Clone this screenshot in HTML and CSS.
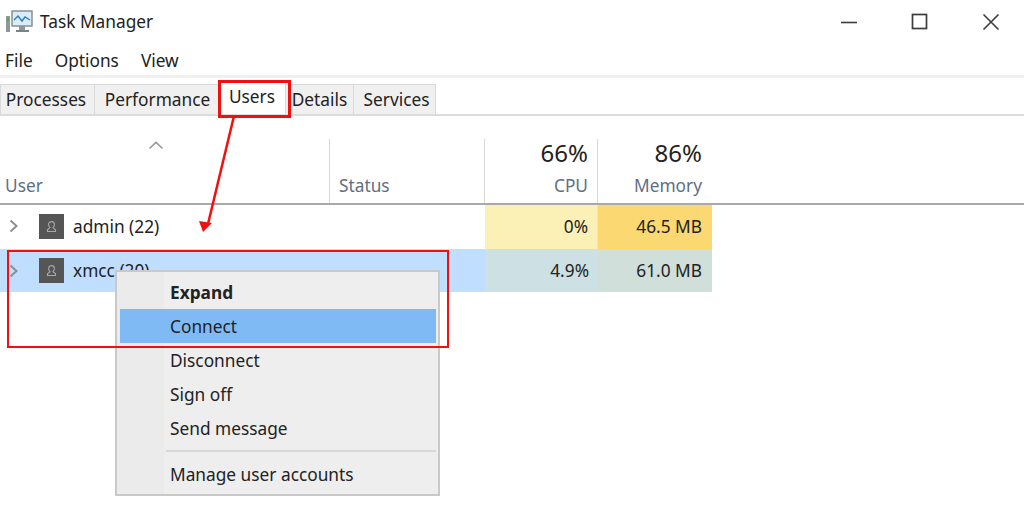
FILE: index.html
```html
<!DOCTYPE html>
<html lang="en">
<head>
<meta charset="utf-8">
<title>Task Manager</title>
<link rel="stylesheet" href="styles.css">
</head>
<body>
<div class="app">
  <header class="titlebar">
    <svg class="appicon" width="28" height="28" viewBox="0 0 28 28">
      <rect x="7" y="3" width="20" height="15" fill="#dcebf5" stroke="#7d8a94" stroke-width="1.4"/>
      <path d="M9 12l4-4 4 5 3-4 5 3" fill="none" stroke="#2a7fc0" stroke-width="1.4"/>
      <rect x="14" y="18" width="6" height="4" fill="#8d979e"/>
      <rect x="11" y="22" width="13" height="2" fill="#78838a"/>
      <rect x="1" y="8" width="4" height="16" fill="#8d979e"/>
      <rect x="2" y="10" width="2" height="3" fill="#55b04c"/>
    </svg>
    <span class="apptitle">Task Manager</span>
    <div class="winbtns">
      <svg class="winbtn" width="18" height="18" viewBox="0 0 18 18"><path d="M1 9.500h16" stroke="#3c3c3c" stroke-width="1.600"/></svg>
      <svg class="winbtn" width="18" height="18" viewBox="0 0 18 18"><rect x="1.500" y="1.500" width="14" height="14" fill="none" stroke="#3c3c3c" stroke-width="1.700"/></svg>
      <svg class="winbtn" width="18" height="18" viewBox="0 0 18 18"><path d="M1.500 1.500l15 15M16.500 1.500l-15 15" stroke="#3c3c3c" stroke-width="1.600"/></svg>
    </div>
  </header>
  <nav class="menubar">
    <span>File</span><span>Options</span><span>View</span>
  </nav>
  <div class="tabs">
    <span class="tab tab-processes">Processes</span>
    <span class="tab tab-performance">Performance</span>
    <span class="tab tab-users">Users</span>
    <span class="tab tab-details">Details</span>
    <span class="tab tab-services">Services</span>
  </div>
  <div class="table">
    <div class="thead">
      <div class="th col-user">
        <svg class="sort" width="16" height="9" viewBox="0 0 16 9"><path d="M1.500 7.500L8 1.500l6.500 6" fill="none" stroke="#9a9a9a" stroke-width="1.700"/></svg>
        <span class="th-label">User</span>
      </div>
      <div class="th col-status"><span class="th-label">Status</span></div>
      <div class="th col-num"><span class="pct">66%</span><span class="th-label">CPU</span></div>
      <div class="th col-num col-mem"><span class="pct">86%</span><span class="th-label">Memory</span></div>
    </div>
    <div class="row row-first">
      <div class="cell col-user user-cell">
        <svg class="chev" width="10" height="14" viewBox="0 0 10 14"><path d="M1.500 1.500L7.500 7l-6 5.500" fill="none" stroke="#8f8f8f" stroke-width="2"/></svg>
        <svg class="avatar" width="25" height="25" viewBox="0 0 25 25"><rect width="25" height="25" fill="#555"/><path d="M8.500 17.500v-1.800l2.500-2c-1-1-1.400-2-1.400-3.200 0-1.700 1.200-2.900 2.900-2.900s2.900 1.200 2.900 2.900c0 1.200-.4 2.200-1.400 3.200l2.500 2v1.800z" fill="none" stroke="#a8a8a8" stroke-width="1.100"/></svg>
        <span>admin (22)</span>
      </div>
      <div class="cell col-status"></div>
      <div class="cell col-num heat-cpu">0%</div>
      <div class="cell col-num col-mem heat-mem">46.5 MB</div>
    </div>
    <div class="row row-selected">
      <div class="cell col-user user-cell">
        <svg class="chev" width="10" height="14" viewBox="0 0 10 14"><path d="M1.500 1.500L7.500 7l-6 5.500" fill="none" stroke="#8f8f8f" stroke-width="2"/></svg>
        <svg class="avatar" width="25" height="25" viewBox="0 0 25 25"><rect width="25" height="25" fill="#555"/><path d="M8.500 17.500v-1.800l2.500-2c-1-1-1.400-2-1.400-3.200 0-1.700 1.200-2.900 2.900-2.900s2.900 1.200 2.900 2.900c0 1.200-.4 2.200-1.400 3.200l2.500 2v1.800z" fill="none" stroke="#a8a8a8" stroke-width="1.100"/></svg>
        <span>xmcc (20)</span>
      </div>
      <div class="cell col-status"></div>
      <div class="cell col-num sel-cpu">4.9%</div>
      <div class="cell col-num col-mem sel-mem">61.0 MB</div>
    </div>
  </div>

  <div class="ctx">
    <div class="ctx-item ctx-bold">Expand</div>
    <div class="ctx-item ctx-active">Connect</div>
    <div class="ctx-item">Disconnect</div>
    <div class="ctx-item">Sign off</div>
    <div class="ctx-item">Send message</div>
    <div class="ctx-sep"></div>
    <div class="ctx-item">Manage user accounts</div>
  </div>

  <div class="mark mark-tab"></div>
  <div class="mark mark-row"></div>
  <svg class="arrow" width="45" height="120" viewBox="0 0 45 120">
    <path d="M39 0L13 108" stroke="#f01010" stroke-width="2.500" fill="none"/>
    <path d="M8 116L4 105l13 2z" fill="#f01010"/>
  </svg>
</div>
</body>
</html>
```
FILE: styles.css
```css
* { box-sizing: border-box; }
html, body { margin: 0; padding: 0; background: #fff; }
body { width: 1024px; height: 524px; overflow: hidden; }
.app {
  position: relative;
  width: 1024px;
  height: 524px;
  font-family: "Noto Sans", "Open Sans", sans-serif;
  font-size: 17.3px;
  color: #222;
}
.titlebar {
  height: 45px;
  display: flex;
  align-items: center;
  padding: 0 0 2px 5px;
}
.appicon { margin-right: 7px; }
.apptitle { font-size: 17.3px; }
.winbtns { margin-left: auto; display: flex; gap: 53px; padding-right: 24px; align-items: center; }
.menubar {
  height: 30px;
  display: flex;
  align-items: center;
  gap: 22px;
  padding: 1px 0 0 5px;
}
.tabs {
  border-top: 3px solid #f0f0f0;
  height: 41px;
  padding-top: 6px;
  display: flex;
  border-bottom: 2px solid #dcdcdc;
  align-items: flex-start;
}
.tab {
  background: #f0f0f0;
  border: 1px solid #d9d9d9;
  border-bottom: 0;
  margin-left: -1px;
  display: flex;
  align-items: center;
  justify-content: center;
  height: 30px;
}
.tab-processes { width: 95px; margin-left: 0; padding-right: 3px; }
.tab-performance { width: 125px; padding-left: 2px; }
.tab-users { width: 68px; background: #fff; height: 32px; margin-top: -2px; padding-bottom: 4px; }
.tab-details { width: 69px; }
.tab-services { width: 83px; padding-left: 4px; }
.table { margin-top: 23px; width: 100%; }
.thead {
  display: flex;
  height: 66px;
  border-bottom: 2px solid #a9a9a9;
}
.th {
  position: relative;
  display: flex;
  flex-direction: column;
  justify-content: flex-end;
  border-right: 1px solid #d8d8d8;
  padding-bottom: 5px;
}
.th-label { color: #5f6f82; line-height: 24px; }
.col-user { width: 330px; }
.col-status { width: 155px; }
.col-num { width: 113px; text-align: right; padding-right: 9px; }
.col-num.col-mem { width: 114px; padding-right: 10px; }
.th.col-user { padding-left: 5px; }
.th.col-status { padding-left: 9px; }
.th.col-mem { border-right: 0; }
.pct { font-size: 24px; line-height: 30px; margin-bottom: 6px; color: #222; }
.sort { position: absolute; left: 148px; top: 2px; }
.row { display: flex; height: 44px; align-items: stretch; }
.row + .row { height: 43px; }
.row-first .cell { padding-bottom: 2px; }
.cell { display: flex; align-items: center; }
.cell.col-num { justify-content: flex-end; }
.user-cell { padding-left: 9px; }
.chev { margin-right: 20px; }
.avatar { margin-right: 9px; }
.heat-cpu { background: #fbf0b5; border-right: 1px solid #f3e8ae; }
.heat-mem { background: #fbd872; }
.row-selected .col-user, .row-selected .col-status { background: #c0deff; }
.sel-cpu { background: #cde0e3; }
.sel-mem { background: #d0dfda; }
.ctx {
  position: absolute;
  left: 115px;
  top: 270px;
  width: 325px;
  height: 226px;
  background: linear-gradient(90deg, #ebebeb 47px, #eeeeee 47px);
  border: 2px solid #c9c9c9;
  padding: 3px 2px 2px 3px;
}
.ctx-item {
  height: 34px;
  display: flex;
  align-items: center;
  padding-left: 50px;
}
.ctx-bold { font-weight: 700; }
.ctx-active { background: #7fbaf5; }
.ctx-sep { height: 2px; margin: 5px 0 5px 46px; background: #d8d8d8; }
.mark { position: absolute; border: 3px solid #f01010; }
.mark-tab { left: 218px; top: 80px; width: 73px; height: 38px; }
.mark-row { left: 7px; top: 250px; width: 442px; height: 98px; border-width: 2px; }
.arrow { position: absolute; left: 195px; top: 116px; }
```
